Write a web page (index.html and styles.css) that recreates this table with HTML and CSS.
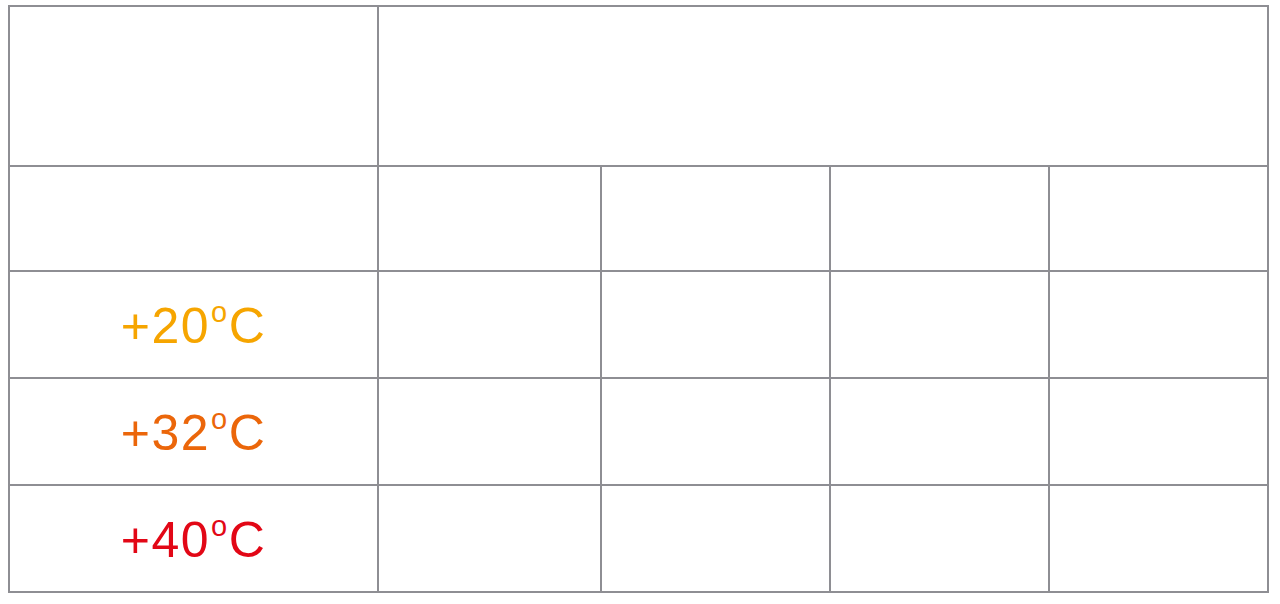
FILE: index.html
```html
<!DOCTYPE html>
<html lang="en">
<head>
<meta charset="utf-8">
<title>Temperature table</title>
<link rel="stylesheet" href="styles.css">
</head>
<body>
<table class="grid">
  <colgroup>
    <col class="c1"><col class="c2"><col class="c3"><col class="c4"><col class="c5">
  </colgroup>
  <tr class="r1">
    <td class="hidden-text">Temperature</td>
    <td class="hidden-text" colspan="4">Service life</td>
  </tr>
  <tr class="r2">
    <td></td>
    <td class="hidden-text small">20%</td>
    <td class="hidden-text small">50%</td>
    <td class="hidden-text small">80%</td>
    <td class="hidden-text small">100%</td>
  </tr>
  <tr class="r3">
    <td class="temp t20">+20<span class="deg">o</span>C</td>
    <td class="hidden-text small">7000</td>
    <td class="hidden-text small">4000</td>
    <td class="hidden-text small">2000</td>
    <td class="hidden-text small">1000</td>
  </tr>
  <tr class="r4">
    <td class="temp t32">+32<span class="deg">o</span>C</td>
    <td class="hidden-text small">2400</td>
    <td class="hidden-text small">1300</td>
    <td class="hidden-text small">700</td>
    <td class="hidden-text small">350</td>
  </tr>
  <tr class="r5">
    <td class="temp t40">+40<span class="deg">o</span>C</td>
    <td class="hidden-text small">1200</td>
    <td class="hidden-text small">650</td>
    <td class="hidden-text small">350</td>
    <td class="hidden-text small">175</td>
  </tr>
</table>
</body>
</html>
```

FILE: styles.css
```css
html, body {
  margin: 0;
  padding: 0;
  background: #ffffff;
}

body {
  padding: 5px 0 0 8px;
  font-family: "Liberation Sans", Arial, sans-serif;
}

.grid {
  border-collapse: collapse;
  width: 1259px;
  table-layout: fixed;
}

.grid td {
  border: 2px solid #8e8e93;
  text-align: center;
  vertical-align: middle;
  padding: 0;
}

.c1 { width: 369px; }
.c2 { width: 223px; }
.c3 { width: 229px; }
.c4 { width: 219px; }
.c5 { width: 219px; }

.r1 { height: 160px; }
.r2 { height: 105px; }
.r3 { height: 107px; }
.r4 { height: 107px; }
.r5 { height: 107px; }

.hidden-text {
  color: #ffffff;
  font-size: 36px;
}

.hidden-text.small {
  font-size: 32px;
}

.temp {
  font-size: 50px;
  font-weight: 400;
  line-height: 1;
  letter-spacing: 1.5px;
}

.deg {
  font-size: 29px;
  vertical-align: 21px;
  margin-left: 1px;
}

.t20 { color: #f6a500; }
.t32 { color: #eb660a; }
.t40 { color: #e20716; }
```
